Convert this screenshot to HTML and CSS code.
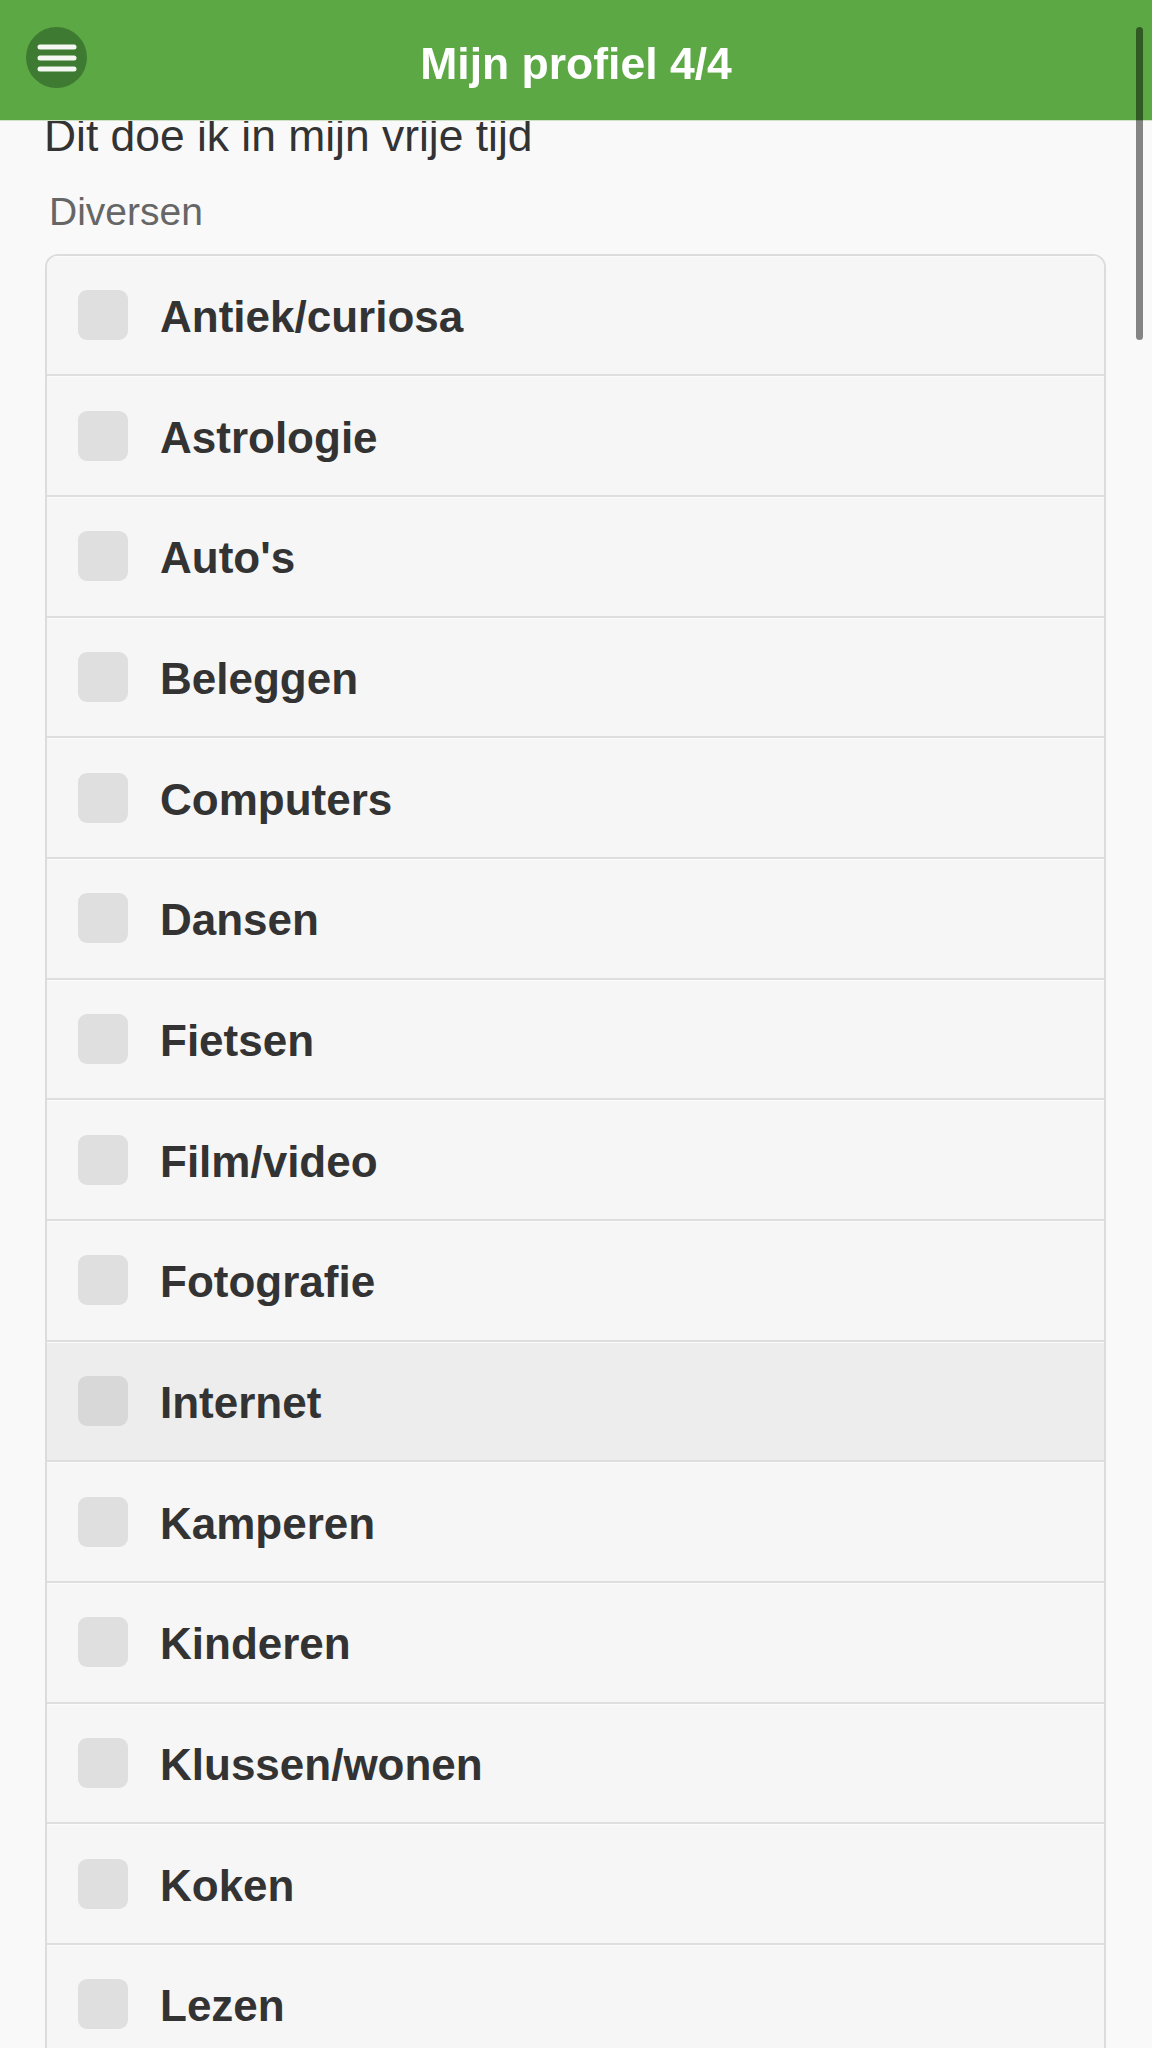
FILE: index.html
```html
<!DOCTYPE html>
<html lang="nl">
<head>
<meta charset="utf-8">
<title>Mijn profiel 4/4</title>
<link rel="stylesheet" href="styles.css">
</head>
<body>
<header class="topbar">
  <button class="menu-btn" aria-label="Menu">
    <svg width="40" height="28" viewBox="0 0 40 28">
      <line x1="3" y1="3" x2="37" y2="3" />
      <line x1="3" y1="14" x2="37" y2="14" />
      <line x1="3" y1="25" x2="37" y2="25" />
    </svg>
  </button>
  <h1 class="title">Mijn profiel 4/4</h1>
</header>
<div class="scroll-thumb"></div>
<main class="content">
  <h2 class="section-title">Dit doe ik in mijn vrije tijd</h2>
  <fieldset class="group">
    <legend class="legend">Diversen</legend>
    <div class="list">
      <label class="item"><span class="box"></span><span class="text">Antiek/curiosa</span></label>
      <label class="item"><span class="box"></span><span class="text">Astrologie</span></label>
      <label class="item"><span class="box"></span><span class="text">Auto's</span></label>
      <label class="item"><span class="box"></span><span class="text">Beleggen</span></label>
      <label class="item"><span class="box"></span><span class="text">Computers</span></label>
      <label class="item"><span class="box"></span><span class="text">Dansen</span></label>
      <label class="item"><span class="box"></span><span class="text">Fietsen</span></label>
      <label class="item"><span class="box"></span><span class="text">Film/video</span></label>
      <label class="item"><span class="box"></span><span class="text">Fotografie</span></label>
      <label class="item item-active"><span class="box"></span><span class="text">Internet</span></label>
      <label class="item"><span class="box"></span><span class="text">Kamperen</span></label>
      <label class="item"><span class="box"></span><span class="text">Kinderen</span></label>
      <label class="item"><span class="box"></span><span class="text">Klussen/wonen</span></label>
      <label class="item"><span class="box"></span><span class="text">Koken</span></label>
      <label class="item"><span class="box"></span><span class="text">Lezen</span></label>
    </div>
  </fieldset>
</main>
</body>
</html>
```
FILE: styles.css
```css
html, body {
  margin: 0;
  padding: 0;
  height: 100%;
  overflow: hidden;
}
body {
  background: #f9f9f9;
  font-family: "Liberation Sans", Arial, Helvetica, sans-serif;
  color: #333;
}
.topbar {
  position: fixed;
  top: 0;
  left: 0;
  right: 0;
  height: 120px;
  background: #5ba844;
  box-shadow: 0 1px 0 #cfe2c8;
  display: flex;
  align-items: center;
  justify-content: center;
  z-index: 10;
}
.menu-btn {
  position: absolute;
  left: 26px;
  top: 27px;
  width: 61px;
  height: 61px;
  border-radius: 50%;
  border: 0;
  padding: 0;
  background: #3e7a31;
  display: flex;
  align-items: center;
  justify-content: center;
}
.menu-btn svg line {
  stroke: #f4f7f2;
  stroke-width: 5;
  stroke-linecap: round;
}
.title {
  margin: 0;
  color: #fff;
  font-size: 44.5px;
  font-weight: bold;
  line-height: 1;
  padding-top: 8px;
}
.scroll-thumb {
  position: fixed;
  right: 9px;
  top: 27px;
  width: 7px;
  height: 313px;
  border-radius: 4px;
  background: rgba(0, 0, 0, 0.47);
  z-index: 20;
}
.content {
  padding: 110px 46px 0 45px;
}
.section-title {
  margin: 0 0 0 -1px;
  font-size: 44.4px;
  font-weight: normal;
  line-height: 52.8px;
  color: #333;
}
.group {
  border: 0;
  margin: 25px 0 0 0;
  padding: 0;
  min-width: 0;
}
.legend {
  padding: 1px 0 0 4px;
  font-size: 39px;
  line-height: 45px;
  color: #666;
  margin-bottom: 20px;
}
.list {
  border: 2px solid #dcdcdc;
  border-radius: 13px;
  overflow: hidden;
  background: #f6f6f6;
}
.item {
  display: flex;
  align-items: center;
  height: 118.66px;
  border-bottom: 2px solid #dedede;
  box-shadow: inset 0 1px 0 #fbfbfb;
  background: #f6f6f6;
  padding-left: 31px;
}
.item-active {
  background: #ededed;
}
.box {
  width: 50px;
  height: 50px;
  border-radius: 9px;
  background: #dfdfdf;
  flex: none;
}
.item-active .box {
  background: #d8d8d8;
}
.text {
  margin-left: 32px;
  padding-top: 4px;
  font-size: 44px;
  font-weight: bold;
  color: #333;
}
```
